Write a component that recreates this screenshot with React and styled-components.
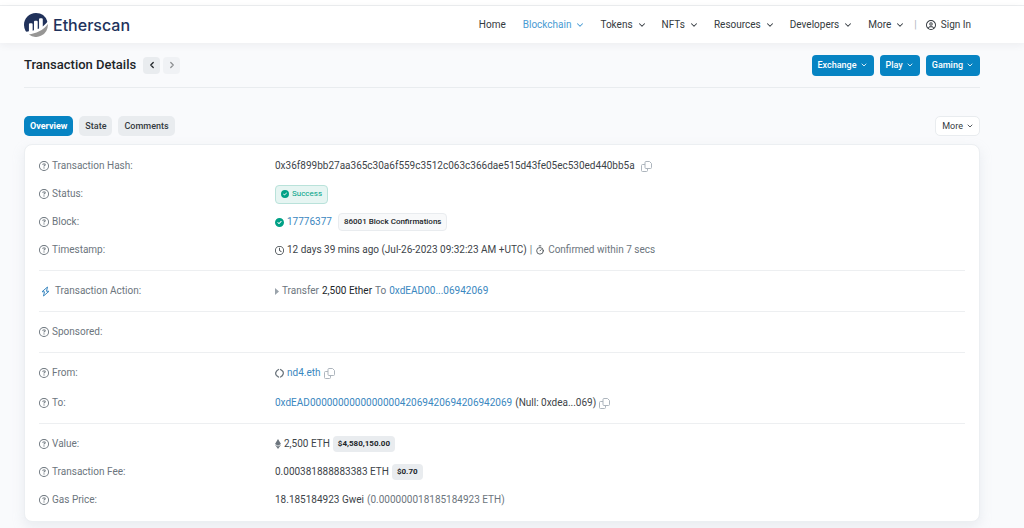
import styled, { createGlobalStyle } from 'styled-components';
import { ChevronDown, ChevronLeft, ChevronRight, Timer } from 'lucide-react';
import {
  FaRegCircleQuestion,
  FaRegCircleUser,
  FaCircleCheck,
  FaRegClock,
} from 'react-icons/fa6';

const GlobalStyle = createGlobalStyle`
  * { box-sizing: border-box; }
  body { margin: 0; background: #f9fafc; color: #3d4449; font-family: Roboto, "Liberation Sans", sans-serif; font-size: 10px; line-height: 16px; }
  a { text-decoration: none; color: #3a87c0; }
  button { font-family: inherit; cursor: pointer; }
  svg { flex-shrink: 0; }
`;

const TopStrip = styled.div` height: 6px; background: #fff; border-bottom: 1px solid #edeff1; `;
const HeaderBar = styled.header` background: #fff; box-shadow: 0 2px 8px rgba(30, 40, 50, 0.06); `;
const Container = styled.div` padding: 0 44px 0 24px; `;
const HeaderInner = styled(Container)` height: 37px; display: flex; align-items: center; justify-content: space-between; `;

const LogoLink = styled.a` display: flex; align-items: center; gap: 5px; color: #21325b; font-family: Inter, sans-serif; font-size: 16px; font-weight: 500; line-height: 24px; `;

const Nav = styled.nav` display: flex; align-items: center; gap: 15px; padding-right: 9px; `;
const NavItem = styled.button` display: flex; align-items: center; gap: 4px; border: 0; padding: 0; background: none; font-size: 10px; line-height: 16px; color: ${({ $active }) => ($active ? '#4a9bd3' : '#343a40')}; `;
const NavLink = styled.a` color: #343a40; display: flex; align-items: center; gap: 5px; `;
const HomeLink = styled(NavLink)` padding-right: 2px; `;
const Account = styled.div` display: flex; align-items: center; gap: 9px; margin-left: -6px; color: #adb5bd; `;

const TitleRow = styled.div` height: 45px; display: flex; align-items: center; justify-content: space-between; border-bottom: 1px solid #e9ecef; `;
const Group = styled.div` display: flex; align-items: center; gap: ${({ $gap }) => $gap}px; `;
const Title = styled.h1` margin: 0 4px 0 0; font-size: 13px; line-height: 20px; font-weight: 500; color: #212529; `;
const StepButton = styled.button` width: 17px; height: 17px; display: flex; align-items: center; justify-content: center; border: 0; padding: 0; border-radius: 4px; background: #e9ecef; color: #212529; &:disabled { opacity: 0.5; } `;
const BlueButton = styled.button` height: 21px; display: flex; align-items: center; gap: 3px; padding: 0 6px; border: 0; border-radius: 4px; background: #0784c3; color: #fff; font-size: 9px; font-weight: 500; `;

const TabRow = styled.div` margin: 28px 0 8px; display: flex; align-items: center; justify-content: space-between; `;
const Tab = styled.button` height: 20px; padding: 0 6px; border: 0; border-radius: 5px; font-size: 9px; font-weight: ${({ $active }) => ($active ? 700 : 500)}; background: ${({ $active }) => ($active ? '#0784c3' : '#e9ecef')}; color: ${({ $active }) => ($active ? '#fff' : '#343a40')}; `;
const MoreButton = styled.button` height: 20px; display: flex; align-items: center; gap: 3px; padding: 0 5px 0 6px; border: 1px solid #e9ecef; border-radius: 5px; background: #fff; color: #343a40; font-size: 9px; `;

const Card = styled.main` background: #fff; border: 1px solid #eceff2; border-radius: 8px; padding: 1px 14px; margin-bottom: 6px; box-shadow: 0 5px 12px rgba(189, 197, 209, 0.25); `;
const Section = styled.dl` margin: 0; padding: 6px 0; display: grid; gap: ${({ $gap }) => $gap || 0}px; & + & { border-top: 1px solid #edeff1; } `;
const Row = styled.div` min-height: 28px; display: grid; grid-template-columns: 1fr 3fr; align-items: center; column-gap: 6px; `;
const Label = styled.dt` display: flex; align-items: center; gap: 3px; color: #6c757d; `;
const Value = styled.dd` margin: 0; display: flex; align-items: center; gap: 3px; white-space: nowrap; `;
const ActionIcon = styled.span` display: flex; padding: 0 2px; color: #3a87c0; `;
const Muted = styled.span` color: #6c757d; `;
const Strong = styled.span` color: #212529; `;
const CopyButton = styled.button` display: flex; border: 0; padding: 0; margin-left: ${({ $space }) => $space || 0}px; background: none; color: #adb5bd; `;

const SuccessBadge = styled.span` height: 19px; display: flex; align-items: center; gap: 3px; padding: 0 5px; border: 1px solid #b9e2da; border-radius: 4px; background: #e6f5f2; color: #00a186; font-size: 8px; `;
const Badge = styled.span` height: ${({ $outlined }) => ($outlined ? 18 : 16)}px; display: flex; align-items: center; padding: 0 5px; margin-left: ${({ $outlined }) => ($outlined ? 3 : 0)}px; border: ${({ $outlined }) => ($outlined ? '1px solid #e9ecef' : '0')}; border-radius: 4px; background: ${({ $outlined }) => ($outlined ? '#f8f9fa' : '#e9ecef')}; color: #212529; font-size: 8px; font-weight: ${({ $outlined }) => ($outlined ? 500 : 700)}; `;

const Caret = ({ size = 10 }) => <ChevronDown size={size} strokeWidth={2.5} />;

const LogoMark = () => (
  <svg width="24" height="24" viewBox="0 0 296 296" aria-hidden="true">
    <path fill="#21325b" d="M60.8,139.6a12.5,12.5,0,0,1,12.5-12.5l20.8.1a12.5,12.5,0,0,1,12.5,12.5v78.6c2.3-.7,5.3-1.4,8.6-2.2a10.4,10.4,0,0,0,8-10.1V108.5a12.5,12.5,0,0,1,12.5-12.5h20.8a12.5,12.5,0,0,1,12.5,12.5v90.3s5.2-2.1,10.3-4.3a10.4,10.4,0,0,0,6.4-9.6V77.2a12.5,12.5,0,0,1,12.5-12.5H219a12.5,12.5,0,0,1,12.5,12.5v89.1c18.1-13.1,36.4-28.8,50.9-47.8a20.9,20.9,0,0,0,3.2-19.5A146.6,146.6,0,0,0,149.5,0C67.4-1.1,0,65.5,0,147.6A146.4,146.4,0,0,0,19.4,221a18.6,18.6,0,0,0,17.8,9.1c4-.3,8.9-.8,13.4-1.5a10.4,10.4,0,0,0,10.2-10.3Z" />
    <path fill="#979695" d="M60.5,266.1A147.1,147.1,0,0,0,294.4,147c0-3.4-.2-6.7-.4-10C240.3,216.7,141.1,254,60.5,266.1" />
  </svg>
);

const EnsIcon = () => (
  <svg width="9" height="10" viewBox="0 0 18 20" fill="none" stroke="#6c757d" strokeWidth="2.5" strokeLinecap="round" aria-hidden="true">
    <path d="M7 3C1 6 0 12 3 15L7 18" />
    <path d="M11 3L15 6C18 9 17 15 11 18" />
  </svg>
);

const BoltIcon = () => (
  <svg width="9" height="11" viewBox="0 0 18 22" fill="none" stroke="currentColor" strokeWidth="2" strokeLinejoin="round" aria-hidden="true">
    <path d="M13 2L2 11.500H7L5 20L16 10.500H11Z" />
  </svg>
);

const EtherIcon = () => (
  <svg width="6" height="10" viewBox="0 0 12 20" fill="#6c757d" aria-hidden="true">
    <path d="M6 0L12 10L6 13.500L0 10Z" />
    <path d="M0 11.500L6 15L12 11.500L6 20Z" />
  </svg>
);

const ActionArrow = () => (
  <svg width="4" height="7" viewBox="0 0 4 7" fill="#9aa3ab" aria-hidden="true">
    <path d="M0 0L4 3.500L0 7Z" />
  </svg>
);

const HelpLabel = ({ children }) => (
  <Label><FaRegCircleQuestion size={10} />{children}</Label>
);

const Copy = ({ $space }) => (
  <CopyButton $space={$space} type="button" aria-label="Copy">
    <svg width="11" height="11" viewBox="0 0 22 22" fill="none" stroke="currentColor" strokeWidth="2" strokeLinejoin="round" aria-hidden="true">
      <path d="M10 1H17L21 5V13A2 2 0 0 1 19 15H10A2 2 0 0 1 8 13V3A2 2 0 0 1 10 1Z" />
      <path d="M8 7H3A2 2 0 0 0 1 9V19A2 2 0 0 0 3 21H11A2 2 0 0 0 13 19V15" />
    </svg>
  </CopyButton>
);

const menus = ['Blockchain', 'Tokens', 'NFTs', 'Resources', 'Developers', 'More'];

export default function App() {
  return (
    <>
      <GlobalStyle />
      <TopStrip />
      <HeaderBar>
        <HeaderInner>
          <LogoLink href="#"><LogoMark />Etherscan</LogoLink>
          <Nav>
            <HomeLink href="#">Home</HomeLink>
            {menus.map((menu) => (
              <NavItem key={menu} type="button" $active={menu === 'Blockchain'}>{menu}<Caret /></NavItem>
            ))}
            <Account>|<NavLink href="#"><FaRegCircleUser size={10} />Sign In</NavLink></Account>
          </Nav>
        </HeaderInner>
      </HeaderBar>

      <Container>
        <TitleRow>
          <Group $gap={3}>
            <Title>Transaction Details</Title>
            <StepButton type="button" aria-label="Previous"><ChevronLeft size={10} strokeWidth={3} /></StepButton>
            <StepButton type="button" aria-label="Next" disabled><ChevronRight size={10} strokeWidth={3} /></StepButton>
          </Group>
          <Group $gap={6}>
            <BlueButton type="button">Exchange<Caret size={8} /></BlueButton>
            <BlueButton type="button">Play<Caret size={8} /></BlueButton>
            <BlueButton type="button">Gaming<Caret size={8} /></BlueButton>
          </Group>
        </TitleRow>

        <TabRow>
          <Group $gap={6}>
            <Tab type="button" $active>Overview</Tab>
            <Tab type="button">State</Tab>
            <Tab type="button">Comments</Tab>
          </Group>
          <MoreButton type="button">More<Caret size={8} /></MoreButton>
        </TabRow>

        <Card>
          <Section>
            <Row>
              <HelpLabel>Transaction Hash:</HelpLabel>
              <Value>0x36f899bb27aa365c30a6f559c3512c063c366dae515d43fe05ec530ed440bb5a<Copy $space={3} /></Value>
            </Row>
            <Row>
              <HelpLabel>Status:</HelpLabel>
              <Value><SuccessBadge><FaCircleCheck size={8} />Success</SuccessBadge></Value>
            </Row>
            <Row>
              <HelpLabel>Block:</HelpLabel>
              <Value><FaCircleCheck size={9} color="#00a186" /><a href="#">17776377</a><Badge $outlined>86001 Block Confirmations</Badge></Value>
            </Row>
            <Row>
              <HelpLabel>Timestamp:</HelpLabel>
              <Value><FaRegClock size={9} />12 days 39 mins ago (Jul-26-2023 09:32:23 AM +UTC) <Muted>|</Muted> <Timer size={10} strokeWidth={2} /><Muted>Confirmed within 7 secs</Muted></Value>
            </Row>
          </Section>
          <Section>
            <Row>
              <Label><ActionIcon><BoltIcon /></ActionIcon>Transaction Action:</Label>
              <Value><ActionArrow /><Muted>Transfer</Muted><Strong>2,500 Ether</Strong><Muted>To</Muted><a href="#">0xdEAD00...06942069</a></Value>
            </Row>
          </Section>
          <Section>
            <Row>
              <HelpLabel>Sponsored:</HelpLabel>
              <Value />
            </Row>
          </Section>
          <Section $gap={2}>
            <Row>
              <HelpLabel>From:</HelpLabel>
              <Value><EnsIcon /><a href="#">nd4.eth</a><Copy /></Value>
            </Row>
            <Row>
              <HelpLabel>To:</HelpLabel>
              <Value><a href="#">0xdEAD000000000000000042069420694206942069</a>(Null: 0xdea...069)<Copy /></Value>
            </Row>
          </Section>
          <Section>
            <Row>
              <HelpLabel>Value:</HelpLabel>
              <Value><EtherIcon />2,500 ETH<Badge>$4,580,150.00</Badge></Value>
            </Row>
            <Row>
              <HelpLabel>Transaction Fee:</HelpLabel>
              <Value>0.000381888883383 ETH<Badge>$0.70</Badge></Value>
            </Row>
            <Row>
              <HelpLabel>Gas Price:</HelpLabel>
              <Value>18.185184923 Gwei<Muted>(0.000000018185184923 ETH)</Muted></Value>
            </Row>
          </Section>
        </Card>
      </Container>
    </>
  );
}
